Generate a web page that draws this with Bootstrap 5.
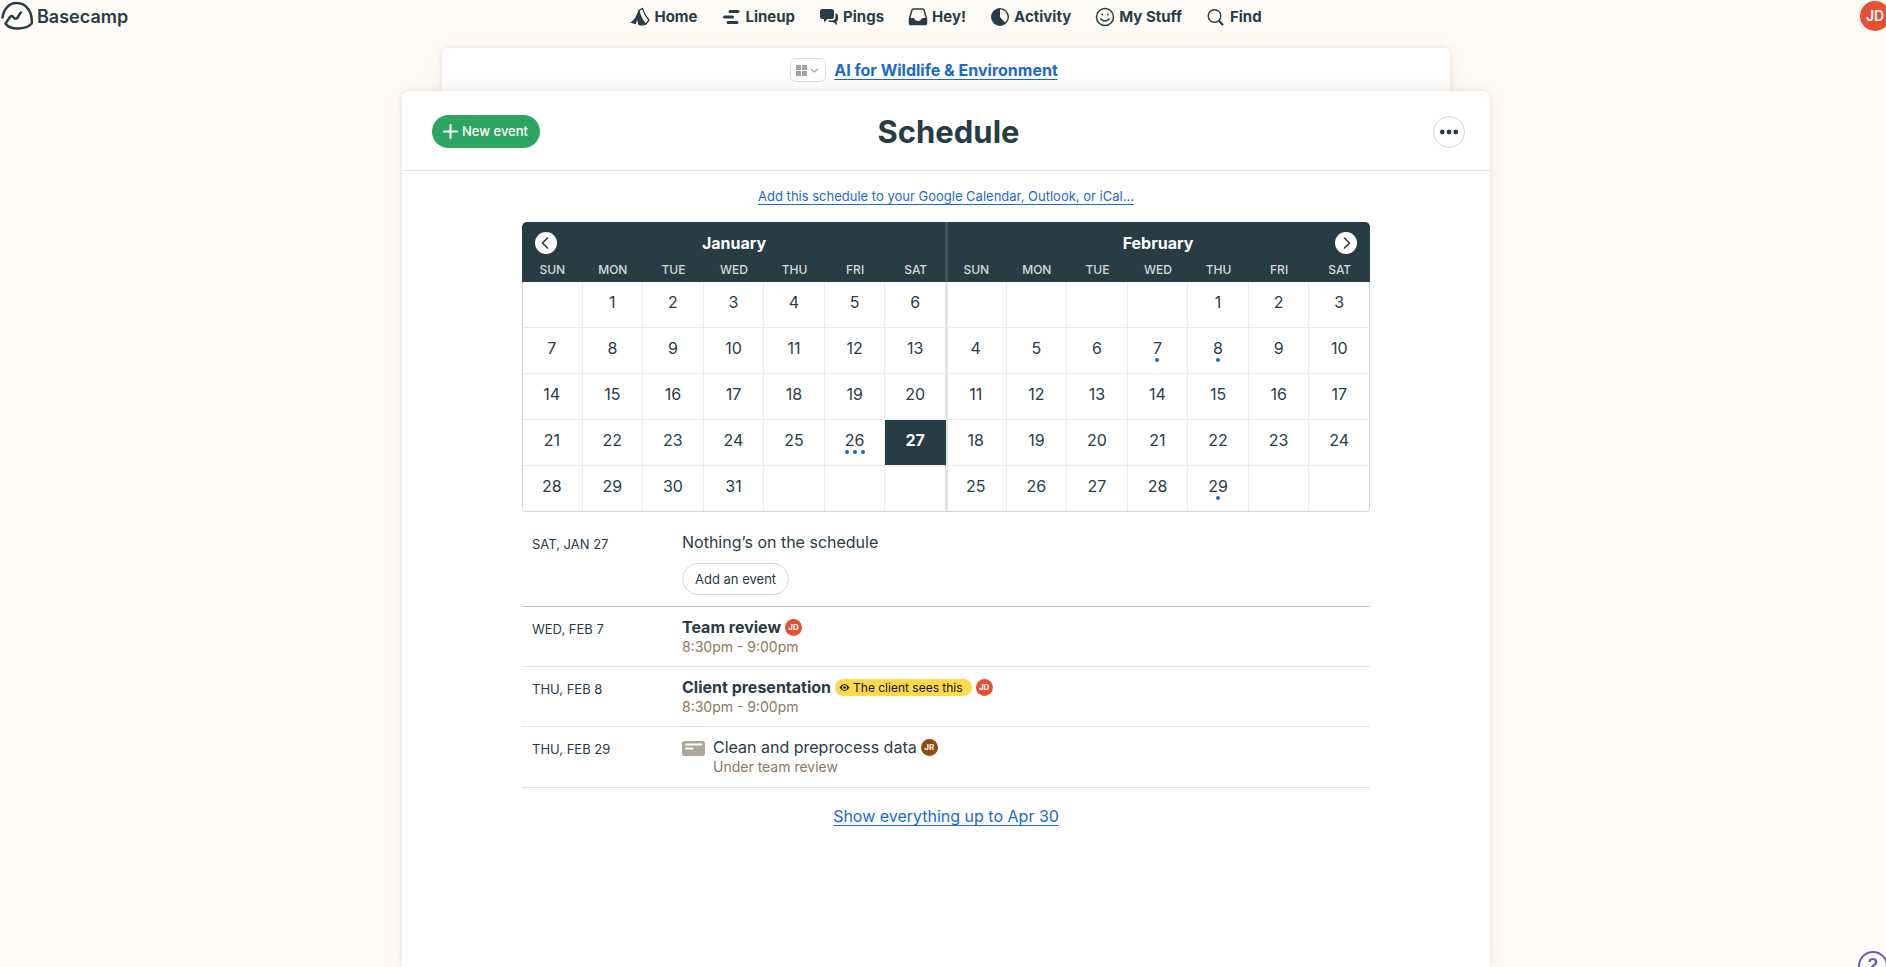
<!DOCTYPE html>
<html lang="en">
<head>
<meta charset="utf-8">
<meta name="viewport" content="width=device-width, initial-scale=1">
<title>Schedule</title>
<link href="https://cdn.jsdelivr.net/npm/bootstrap@5.3.0/dist/css/bootstrap.min.css" rel="stylesheet">
<style>
:root{--ink:#283c46;--blue:#1b6ac9;--tan:#8b795d;--rule:#e3e3da}
body{font-family:Inter,"Liberation Sans",sans-serif;font-size:16px;line-height:20px;color:var(--ink);background:#fffcf8;overflow-x:hidden}
a{color:var(--blue);text-underline-offset:3px}
/* the page is a touch wider than the window, so its right edge is clipped */
.page-wrap{width:calc(100% + 6px);min-height:100vh}
.topbar{height:32px}
.topbar a{color:var(--ink);text-decoration:none}
.brand{font-size:18px;font-weight:600;padding-left:1px;gap:3px}
.brand span{padding-top:2px}
.main-links{font-size:15px;font-weight:700;gap:24px;padding-top:2px}
.main-links a{gap:4px}
.main-links svg{width:20px;height:20px}
.side{flex:1 1 0}
.face{display:inline-flex;align-items:center;justify-content:center;border-radius:50%;background:#e64f33;color:#fff;font-weight:600}
.face-lg{width:30px;height:30px;font-size:14px;margin-right:2px}
.face-sm{width:17px;height:17px;font-size:8px;font-weight:700;line-height:17px}
.face-brown{background:#8f4a0f}
.sheet{background:#fff;box-shadow:0 0 4px rgba(90,60,30,.12),0 2px 24px rgba(120,50,20,.09)}
.sheet-back{max-width:1008px;height:43px;margin-top:16px;border-radius:5px 5px 0 0}
.sheet-front{position:relative;max-width:1088px;min-height:calc(100vh - 91px);border-radius:7px 7px 0 0}
.project-menu{width:36px;height:24px;border:1px solid #dedede;border-radius:6px;background:#fff}
.project-link{font-weight:700}
.sheet-head{height:80px;padding:2px 25px 0 30px;border-bottom:1px solid var(--rule)}
.sheet-head h1{font-size:31px;line-height:40px;font-weight:700}
.btn-new{height:33px;background:#2da562;color:#fff;font-size:13px;font-weight:500;gap:4px;padding:0 12px 0 11px}
.btn-new:hover{background:#258c52;color:#fff}
.btn-more{width:32px;height:32px;background:#fff;border:1px solid #d6d6d6}
.content{max-width:848px}
.subscribe{font-size:13px;line-height:20px;padding:15px 0 16px}
.calendar{position:relative;height:290px}
.calendar::after{content:"";position:absolute;inset:60px 0 0 0;border:1px solid #d5d5d5;border-top:0;border-radius:0 0 5px 5px;pointer-events:none}
.month{width:50%;table-layout:fixed;border-collapse:separate;border-spacing:0;text-align:center}
.month caption{caption-side:top;padding:0;height:36px;line-height:42px;font-weight:700;color:#fff;background:var(--ink);text-align:center}
.month th{height:24px;padding:0;background:var(--ink);color:#d6dadc;font-size:12px;line-height:24px;font-weight:500}
.month td{height:46px;padding:10px 0 0;vertical-align:top;border-right:1px solid #ededed;border-bottom:1px solid #ededed}
.month td:last-child{border-right-color:transparent}
.month a{color:inherit;text-decoration:none;display:block}
.jan caption{border-radius:5px 0 0 0;box-shadow:inset -1px 0 #40525b}
.jan th:last-child{box-shadow:inset -1px 0 #40525b}
.jan td:last-child{border-right-color:#e3e3e3}
.feb caption{border-radius:0 5px 0 0;box-shadow:inset 2px 0 #40525b}
.feb th:first-child{box-shadow:inset 2px 0 #40525b}
.feb td:first-child{box-shadow:inset 2px 0 #e3e3e3}
.jan td.today{background:var(--ink);border-right-color:var(--ink);color:#fff;font-weight:700}
.dots{display:flex;justify-content:center;gap:4px}
.dots i{width:4px;height:4px;border-radius:50%;background:var(--blue)}
.step{position:absolute;top:10px;width:22px;height:22px;border:0;border-radius:50%;background:#fff;padding:0;z-index:1}
.step-prev{left:13px}
.step-next{right:13px}
.agenda-row{border-bottom:1px solid var(--rule);height:60px;padding-top:10px}
.agenda-row.first-day{height:95px;padding-top:20px;border-bottom-color:#c8c1ae}
.agenda-row.last-day{height:61px}
.agenda-date{width:160px;padding:3px 0 0 10px;font-size:13px;line-height:18px}
.agenda-title{line-height:20px;gap:4px}
.agenda-title strong{font-weight:700}
.agenda-sub{font-size:14px;line-height:20px;color:var(--tan)}
.btn-add{height:32px;margin-top:11px;border:1px solid #d6d6d6;font-size:13px;font-weight:400;line-height:18px;padding:0 12px;color:var(--ink);background:#fff}
.client-tag{height:17px;border-radius:9px;background:#ffd84b;color:#111;font-size:12px;line-height:17px;gap:3px;padding:0 9px 0 4px}
.show-more{padding-top:18px}
.help{position:fixed;right:-2px;bottom:-14px;width:30px;height:30px;border:2px solid #6f5bb5;border-radius:50%;background:#fff;color:#6f5bb5;font-size:20px;font-weight:600;line-height:26px;padding:0}
svg{display:block;flex:none}
</style>
</head>
<body>
<div class="page-wrap d-flex flex-column">
<header class="topbar d-flex">
  <div class="side">
    <a href="#" class="brand d-inline-flex align-items-center">
      <svg width="33" height="32" viewBox="0 0 33 32" fill="none" stroke="#283c46" stroke-width="2.5" stroke-linecap="round" stroke-linejoin="round"><path d="M1.500 17.500C3 8 9 3 15.500 3c10 0 16 9 15.300 20.500C27 27.500 22 28.500 17 28.500c-5.500 0-10-1.200-12.500-5 2-2.500 4-7 6-7.500 2.200-.3 2.300 3.200 4.500 2.800 2.200-.5 3-5 5-6.300"/></svg>
      <span>Basecamp</span></a>
  </div>
  <nav class="main-links d-flex align-items-center" aria-label="Main">
    <a href="#" class="d-flex align-items-center"><svg viewBox="0 0 20 20"><path fill="#283c46" d="M8.200 4.500 5.300 10.500C3.800 13 2 14.500 0 15.500l3.300 1 2.500.8 1.300-4.500 1.300 5.200 4.200.8L10 12.500z"/><path fill="none" stroke="#283c46" stroke-width="1.300" stroke-linejoin="round" d="m8.500 3.800 4-2.400c1.500 4.600 3.500 8.600 6.500 11.600l-3.500 4.500"/><path fill="#283c46" d="M7.800 3.500 9.500 3c1 5.500 3.200 10 7 14.300l-3.500 1.500C9.500 14.500 8 9.500 7.800 3.500z"/></svg>Home</a>
    <a href="#" class="d-flex align-items-center"><svg viewBox="0 0 20 20" stroke="#283c46" stroke-width="3" stroke-linecap="round"><path d="M9 4.500h8M3.500 10h8M7 15.500h9"/></svg>Lineup</a>
    <a href="#" class="d-flex align-items-center"><svg viewBox="0 0 20 20" fill="#283c46"><path d="M3.500 2h9Q15 2 15 4.500v5q0 2.500-2.500 2.500H8.500L5 15.500V12H3.500Q1 12 1 9.500v-5Q1 2 3.500 2z"/><path d="M16.500 6q2.500.8 2.500 3v3q0 2-1.500 2.500L18 18l-4-3h-3q-1.500 0-2-1.500h4q3.500 0 3.500-4z"/></svg>Pings</a>
    <a href="#" class="d-flex align-items-center"><svg viewBox="0 0 20 20"><path fill="none" stroke="#283c46" stroke-width="1.500" stroke-linejoin="round" d="M1.500 11.500 4 3q.3-1 1.300-1h9.400q1 0 1.300 1l2.500 8.500v5q0 1-1 1h-15q-1 0-1-1z"/><path fill="#283c46" d="M1.500 11H6q1 3 4 3t4-3h4.500v5.500q0 1-1 1h-15q-1 0-1-1z"/></svg>Hey!</a>
    <a href="#" class="d-flex align-items-center"><svg viewBox="0 0 20 20"><circle cx="10" cy="10" r="8.300" fill="#283c46" stroke="#283c46" stroke-width="1.400"/><path fill="#fffcf8" d="M10 2.500a7.500 7.500 0 0 1 5 13L10 10z"/></svg>Activity</a>
    <a href="#" class="d-flex align-items-center"><svg viewBox="0 0 20 20" fill="none" stroke="#283c46" stroke-width="1.500" stroke-linecap="round"><circle cx="10" cy="10" r="8.500"/><path d="M5.800 12q4.200 4 8.400 0"/><path stroke-width="2" d="M7.200 7.500v.1M12.800 7.500v.1"/></svg>My Stuff</a>
    <a href="#" class="d-flex align-items-center"><svg viewBox="0 0 20 20" fill="none" stroke="#283c46" stroke-linecap="round"><circle cx="8.500" cy="9" r="6.300" stroke-width="1.400"/><path stroke-width="2.200" d="m13.500 14.500 3 3"/></svg>Find</a>
  </nav>
  <div class="side d-flex justify-content-end align-items-center"><a href="#" class="face face-lg text-white" aria-label="Your account">JD</a></div>
</header>

<div class="sheet sheet-back w-100 mx-auto d-flex align-items-center">
  <div class="side d-flex justify-content-end">
    <button class="project-menu d-flex align-items-center justify-content-center p-0 me-2" aria-label="Project tools">
      <svg width="26" height="14" viewBox="0 0 26 14"><path fill="#a3a3a3" d="M1 2h5v5H1zM7 2h5v5H7zM1 8h5v5H1zM7 8h5v5H7z"/><path fill="none" stroke="#a3a3a3" stroke-width="1.300" d="m16 6 3.500 3L23 6"/></svg>
    </button>
  </div>
  <a href="#" class="project-link">AI for Wildlife &amp; Environment</a>
  <div class="side"></div>
</div>

<main class="sheet sheet-front w-100 mx-auto flex-grow-1">
  <div class="sheet-head d-flex align-items-center">
    <div class="side"><button class="btn btn-new rounded-pill border-0 d-flex align-items-center"><svg width="15" height="15" viewBox="0 0 15 15" stroke="#fff" stroke-width="2" stroke-linecap="round"><path d="M7.500 1v13M1 7.500h13"/></svg>New event</button></div>
    <h1 class="mb-0">Schedule</h1>
    <div class="side d-flex justify-content-end"><button class="btn-more rounded-circle p-0 d-flex align-items-center justify-content-center" aria-label="More options"><svg width="20" height="6" viewBox="0 0 20 6" fill="#283c46"><circle cx="3.300" cy="3" r="2.400"/><circle cx="10" cy="3" r="2.400"/><circle cx="16.700" cy="3" r="2.400"/></svg></button></div>
  </div>

  <div class="content mx-auto">
    <div class="subscribe text-center"><a href="#">Add this schedule to your Google Calendar, Outlook, or iCal…</a></div>

    <section class="calendar d-flex" aria-label="Calendar">
      <button class="step step-prev" aria-label="Previous month"><svg width="22" height="22" viewBox="0 0 22 22" fill="none" stroke="#283c46" stroke-width="1.600" stroke-linecap="round" stroke-linejoin="round"><path d="m12.500 6-5 5 5 5"/></svg></button>
      <button class="step step-next" aria-label="Next month"><svg width="22" height="22" viewBox="0 0 22 22" fill="none" stroke="#283c46" stroke-width="1.600" stroke-linecap="round" stroke-linejoin="round"><path d="m9.500 6 5 5-5 5"/></svg></button>
      <table class="month jan">
        <caption>January</caption>
        <thead><tr><th>SUN</th><th>MON</th><th>TUE</th><th>WED</th><th>THU</th><th>FRI</th><th>SAT</th></tr></thead>
        <tbody>
          <tr><td></td><td>1</td><td>2</td><td>3</td><td>4</td><td>5</td><td>6</td></tr>
          <tr><td>7</td><td>8</td><td>9</td><td>10</td><td>11</td><td>12</td><td>13</td></tr>
          <tr><td>14</td><td>15</td><td>16</td><td>17</td><td>18</td><td>19</td><td>20</td></tr>
          <tr><td>21</td><td>22</td><td>23</td><td>24</td><td>25</td><td><a href="#">26<span class="dots"><i></i><i></i><i></i></span></a></td><td class="today">27</td></tr>
          <tr><td>28</td><td>29</td><td>30</td><td>31</td><td></td><td></td><td></td></tr>
        </tbody>
      </table>
      <table class="month feb">
        <caption>February</caption>
        <thead><tr><th>SUN</th><th>MON</th><th>TUE</th><th>WED</th><th>THU</th><th>FRI</th><th>SAT</th></tr></thead>
        <tbody>
          <tr><td></td><td></td><td></td><td></td><td>1</td><td>2</td><td>3</td></tr>
          <tr><td>4</td><td>5</td><td>6</td><td><a href="#">7<span class="dots"><i></i></span></a></td><td><a href="#">8<span class="dots"><i></i></span></a></td><td>9</td><td>10</td></tr>
          <tr><td>11</td><td>12</td><td>13</td><td>14</td><td>15</td><td>16</td><td>17</td></tr>
          <tr><td>18</td><td>19</td><td>20</td><td>21</td><td>22</td><td>23</td><td>24</td></tr>
          <tr><td>25</td><td>26</td><td>27</td><td>28</td><td><a href="#">29<span class="dots"><i></i></span></a></td><td></td><td></td></tr>
        </tbody>
      </table>
    </section>

    <section aria-label="Agenda">
      <div class="agenda-row first-day d-flex">
        <div class="agenda-date">SAT, JAN 27</div>
        <div><div class="agenda-title">Nothing’s on the schedule</div><button class="btn btn-add rounded-pill">Add an event</button></div>
      </div>
      <div class="agenda-row d-flex">
        <div class="agenda-date">WED, FEB 7</div>
        <div><div class="agenda-title d-flex align-items-center"><strong>Team review</strong><span class="face face-sm">JD</span></div><div class="agenda-sub">8:30pm - 9:00pm</div></div>
      </div>
      <div class="agenda-row d-flex">
        <div class="agenda-date">THU, FEB 8</div>
        <div><div class="agenda-title d-flex align-items-center"><strong>Client presentation</strong><span class="client-tag d-flex align-items-center"><svg width="11" height="9" viewBox="0 0 11 9"><path fill="#111" d="M.5 4.500Q5.500-2.500 10.500 4.500 5.500 11.500.5 4.500z"/><circle cx="5.500" cy="4.500" r="2.500" fill="#ffd84b"/><circle cx="5.500" cy="4.500" r="1.300" fill="#111"/></svg>The client sees this</span><span class="face face-sm">JD</span></div><div class="agenda-sub">8:30pm - 9:00pm</div></div>
      </div>
      <div class="agenda-row last-day d-flex">
        <div class="agenda-date">THU, FEB 29</div>
        <svg class="mt-1 me-2" width="23" height="15" viewBox="0 0 23 15"><rect width="23" height="15" rx="2.500" fill="#aca69d"/><path stroke="#fff" stroke-width="1.800" stroke-linecap="round" d="M4 3.500h15.500"/><path stroke="#fff" stroke-width="2.200" stroke-linecap="round" d="M4 7.500h6.500"/></svg>
        <div><div class="agenda-title d-flex align-items-center"><span>Clean and preprocess data</span><span class="face face-sm face-brown">JR</span></div><div class="agenda-sub">Under team review</div></div>
      </div>
    </section>
    <div class="show-more text-center"><a href="#">Show everything up to Apr 30</a></div>
  </div>
</main>
</div>
<button class="help" aria-label="Help">?</button>
<script src="https://cdn.jsdelivr.net/npm/bootstrap@5.3.0/dist/js/bootstrap.bundle.min.js"></script>
</body>
</html>
